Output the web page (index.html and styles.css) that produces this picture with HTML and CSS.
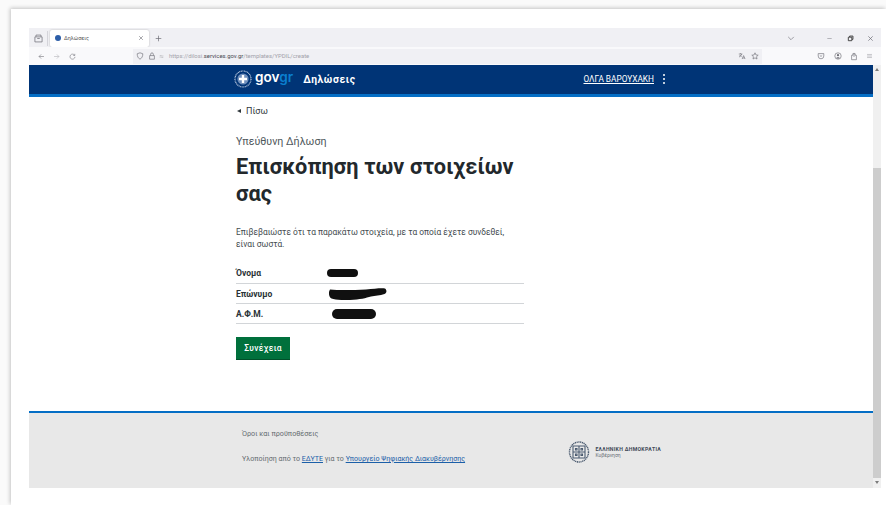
FILE: index.html
```html
<!DOCTYPE html>
<html lang="el">
<head>
<meta charset="utf-8">
<title>Δηλώσεις</title>
<link rel="stylesheet" href="styles.css">
</head>
<body>
<div class="sheet">
  <div class="window">
    <div class="tabstrip">
      <svg class="ico tabs-ico" viewBox="0 0 10 10"><path d="M1 3.2h8v5.6H1zM2.2 3V1.2h5.6V3M3.6 5h2.8"/></svg>
      <span class="tab-sep"></span>
      <div class="tab">
        <span class="favicon"></span>
        <span class="tab-title">Δηλώσεις</span>
        <svg class="ico tab-close" viewBox="0 0 8 8"><path d="M1.5 1.5l5 5M6.5 1.5l-5 5"/></svg>
      </div>
      <svg class="ico new-tab" viewBox="0 0 8 8"><path d="M4 .8v6.4M.8 4h6.4"/></svg>
      <span class="spacer"></span>
      <svg class="ico tab-list" viewBox="0 0 10 6"><path d="M1.5 1l3.5 3.5L8.500 1"/></svg>
      <svg class="ico win-min" viewBox="0 0 8 8"><path d="M1.500 4h5"/></svg>
      <svg class="ico win-restore" viewBox="0 0 8 8"><path d="M1.500 2.500h4v4h-4zM3 2.300V1.200h3.800V5H5.800"/></svg>
      <svg class="ico win-close" viewBox="0 0 8 8"><path d="M1.500 1.500l5 5M6.500 1.500l-5 5"/></svg>
    </div>
    <div class="toolbar">
      <svg class="ico nav-back" viewBox="0 0 10 10"><path d="M8.500 5h-7M4.500 2L1.500 5l3 3"/></svg>
      <svg class="ico nav-forward" viewBox="0 0 10 10"><path d="M1.500 5h7M5.500 2l3 3-3 3"/></svg>
      <svg class="ico nav-reload" viewBox="0 0 10 10"><path d="M8 3.200A3.600 3.600 0 1 0 8.600 5.500M8.300 1.200v2.300H6"/></svg>
      <div class="urlbar">
        <svg class="ico url-shield" viewBox="0 0 10 10"><path d="M5 1l3.500 1.200C8.500 5.500 7.300 7.800 5 9 2.700 7.800 1.500 5.500 1.500 2.200z"/></svg>
        <svg class="ico url-lock" viewBox="0 0 10 10"><path d="M2 4.500h6V9H2zM3.300 4.500V2.800a1.700 1.700 0 0 1 3.400 0v1.700"/></svg>
        <svg class="ico url-perm" viewBox="0 0 10 10"><path d="M1.500 3.500h4M7 3.500h1.500M1.500 6.500H3M4.500 6.500h4"/></svg>
        <span class="url-text">https://dilosi.<b>services.gov.gr</b>/templates/YPDIL/create</span>
        <span class="spacer"></span>
        <svg class="ico url-translate" viewBox="0 0 10 10"><path d="M1 2.500h4.500M3.200 1.500v1M4.600 2.500C4.200 4.300 3 5.500 1.300 6.200M2 3.800c.6 1 1.500 1.600 2.500 2M5.200 8.800L7 4.500l1.800 4.300M5.800 7.500h2.400"/></svg>
        <svg class="ico url-star" viewBox="0 0 10 10"><path d="M5 1l1.200 2.700 2.800.3-2.100 1.900.6 2.900L5 7.300 2.500 8.800l.6-2.900L1 4l2.800-.3z"/></svg>
      </div>
      <svg class="ico tb-pocket" viewBox="0 0 10 10"><path d="M1.500 2h7v3a3.500 3.500 0 0 1-7 0zM3.500 4.200L5 5.600l1.500-1.400"/></svg>
      <svg class="ico tb-account" viewBox="0 0 10 10"><circle cx="5" cy="5" r="4"/><circle class="solid" cx="5" cy="4" r="1.400"/><path class="solid" d="M2.700 7.600C3.200 6.200 6.800 6.200 7.300 7.600 6 8.500 4 8.500 2.700 7.600z"/></svg>
      <svg class="ico tb-share" viewBox="0 0 10 10"><path d="M2 3.500h1.500V1.500h3v2H8V9H2zM5 .5v5"/></svg>
      <svg class="ico tb-menu" viewBox="0 0 10 10"><path d="M1.500 2.800h7M1.500 5h7M1.500 7.200h7"/></svg>
    </div>
    <div class="viewport">
      <div class="page">
        <header class="site-header">
          <div class="brand">
            <svg class="brand-seal" viewBox="0 0 18 18">
              <circle class="seal-ring" cx="9" cy="9" r="8"/>
              <circle class="seal-disc" cx="9" cy="9" r="5.600"/>
              <path class="seal-cross" d="M7.800 5h2.400v2.800H13v2.400h-2.800V13H7.800v-2.800H5V7.800h2.800z"/>
            </svg>
            <span class="brand-name">gov<span class="brand-accent">gr</span></span>
            <span class="brand-app">Δηλώσεις</span>
          </div>
          <div class="user">
            <a class="user-name">ΟΛΓΑ ΒΑΡΟΥΧΑΚΗ</a>
            <span class="kebab"><i></i><i></i><i></i></span>
          </div>
        </header>
        <main class="content">
          <a class="back"><span class="back-arrow"></span>Πίσω</a>
          <p class="eyebrow">Υπεύθυνη Δήλωση</p>
          <h1 class="title">Επισκόπηση των στοιχείων σας</h1>
          <p class="lead">Επιβεβαιώστε ότι τα παρακάτω στοιχεία, με τα οποία έχετε συνδεθεί, είναι σωστά.</p>
          <dl class="facts">
            <div class="fact"><dt>Όνομα</dt><dd><span class="mask mask-first"></span></dd></div>
            <div class="fact"><dt>Επώνυμο</dt><dd><svg class="mask-last" viewBox="0 0 59 12"><path d="M2 1.500C12 2.500 26 2 38 1.500 46 1 52 0 57 .5 59 2 59 5 56.500 6 52 7.500 47 7.500 43 8.500 38 10 32 11.500 22 12 14 12.200 7 12 3.500 10.500 1 9 0 4.500 2 1.500z"/></svg></dd></div>
            <div class="fact"><dt>Α.Φ.Μ.</dt><dd><span class="mask mask-tax"></span></dd></div>
          </dl>
          <button class="primary" type="button">Συνέχεια</button>
        </main>
        <footer class="site-footer">
          <div class="footer-text">
            <p class="terms">Όροι και προϋποθέσεις</p>
            <p class="credits">Υλοποίηση από το <a>ΕΔΥΤΕ</a> για το <a>Υπουργείο Ψηφιακής Διακυβέρνησης</a></p>
          </div>
          <div class="gov-mark">
            <svg class="gov-seal" viewBox="0 0 22 24">
              <ellipse class="seal-outer" cx="11" cy="12" rx="9.500" ry="10"/>
              <path class="seal-shield" d="M5 6h12v12H5zM11 6v12M5 12h12M7.500 8.500h1.500v1.500H7.500zM13 8.500h1.500v1.500H13zM7.500 14h1.500v1.500H7.500zM13 14h1.500v1.500H13z"/>
            </svg>
            <div class="gov-words">
              <span class="gov-state">ΕΛΛΗΝΙΚΗ ΔΗΜΟΚΡΑΤΙΑ</span>
              <span class="gov-dept">Κυβέρνηση</span>
            </div>
          </div>
        </footer>
      </div>
      <div class="scrollbar">
        <span class="sb-up"></span>
        <span class="sb-track"><span class="sb-thumb"></span></span>
        <span class="sb-down"></span>
      </div>
    </div>
  </div>
</div>
</body>
</html>
```
FILE: styles.css
```css
* { box-sizing: border-box; }

html, body {
  margin: 0;
  height: 100%;
  overflow: hidden;
  background: #fafafa;
}

body { font-family: Roboto, "Noto Sans", sans-serif; color: #1d2529; }

.sheet {
  margin: 9px 0 0 11px;
  height: 496px;
  padding: 19px 5px 0 18px;
  background: #fff;
  box-shadow: -1px -1px 4px rgba(0, 0, 0, .22);
}

.window { display: flex; flex-direction: column; }

.ico { fill: none; stroke: #6d6d75; stroke-width: .8; display: block; flex: none; }
.ico .solid { fill: #6d6d75; stroke: none; }
.spacer { flex: 1; }

/* Tab strip */
.tabstrip {
  height: 19px;
  padding: 1px 0 0 5px;
  display: flex;
  align-items: center;
  background: #f0f0f4;
}
.tabs-ico { width: 9px; height: 9px; }
.tab-sep { width: 1px; height: 15px; margin: 0 2px 0 4px; background: #d4d4da; }
.tab {
  width: 99px;
  height: 17px;
  padding: 0 5px;
  display: flex;
  align-items: center;
  background: #fff;
  border-radius: 2px;
  box-shadow: 0 0 2px rgba(0, 0, 0, .25);
}
.favicon { width: 6px; height: 6px; border-radius: 50%; background: #2c5ea8; }
.tab-title { margin-left: 3px; flex: 1; font-size: 5.400px; color: #555; }
.tab-close { width: 6px; height: 6px; }
.new-tab { width: 7px; height: 7px; margin-left: 6px; }
.tab-list { width: 8px; height: 5px; margin-right: 31px; }
.win-min { width: 7px; height: 7px; margin-right: 14px; stroke: #9a9aa0; }
.win-restore { width: 7px; height: 7px; margin-right: 13px; stroke: #333; stroke-width: 1; }
.win-close { width: 7px; height: 7px; margin-right: 7px; }

/* Address toolbar */
.toolbar {
  height: 18px;
  padding: 0 8px 0 9px;
  display: flex;
  align-items: center;
  background: #f9f9fb;
}
.nav-back, .nav-forward, .nav-reload { width: 7px; height: 7px; }
.nav-forward { margin-left: 8px; stroke: #b0b0b6; }
.nav-reload { margin-left: 9px; }
.urlbar {
  width: 630px;
  height: 15px;
  margin-left: 57px;
  padding: 0 3px;
  display: flex;
  align-items: center;
  background: #f0f0f4;
}
.url-shield { width: 8px; height: 8px; margin-right: 4px; }
.url-lock { width: 8px; height: 8px; margin-right: 3px; }
.url-perm { width: 5px; height: 5px; margin-right: 5px; }
.url-text { font-size: 5.920px; color: #a2a2aa; white-space: nowrap; }
.url-text b { font-weight: 400; color: #4a4a52; }
.url-translate { width: 8px; height: 8px; margin-right: 5px; }
.url-star { width: 8px; height: 8px; }
.tb-pocket { width: 8px; height: 8px; margin-left: 55px; }
.tb-account { width: 8px; height: 8px; margin-left: 9px; }
.tb-share { width: 8px; height: 9px; margin-left: 8px; }
.tb-menu { width: 7px; height: 8px; margin-left: 8px; stroke: #a0a0a6; }

/* Page viewport and scrollbar */
.viewport { display: flex; height: 423px; }
.page { width: 844px; display: flex; flex-direction: column; background: #fff; }

.scrollbar { width: 8px; display: flex; flex-direction: column; background: #f0f0f0; }
.sb-up, .sb-down { height: 10px; flex: none; position: relative; }
.sb-up::after, .sb-down::after {
  content: "";
  position: absolute;
  left: 2px;
  top: 3px;
  border: 2.500px solid transparent;
  border-top: 0;
  border-bottom: 3px solid #7c7c7c;
}
.sb-down::after { transform: rotate(180deg); }
.sb-track { flex: 1; padding-top: 93px; display: flex; }
.sb-thumb { flex: 1; background: #cdcdcd; }

/* Site header */
.site-header {
  height: 32px;
  padding: 0 208px 1px 205px;
  display: flex;
  align-items: center;
  justify-content: space-between;
  background: #003476;
  border-bottom: 3px solid #046ec5;
  color: #fff;
}
.brand { display: flex; align-items: center; }
.brand-seal { width: 18px; height: 18px; }
.seal-ring { fill: none; stroke: #b9c8de; stroke-width: 1.200; stroke-dasharray: 1 .6; }
.seal-disc { fill: #6f8fbc; }
.seal-cross { fill: #fff; }
.brand-name {
  margin-left: 3px;
  font-family: Inter, sans-serif;
  font-size: 13.600px;
  font-weight: 600;
  line-height: 16px;
  position: relative;
  top: -2px;
}
.brand-accent { color: #0a7fd0; }
.brand-app { margin-left: 10px; font-size: 10.300px; font-weight: 700; letter-spacing: .62px; }
.user { display: flex; align-items: center; }
.user-name { font-size: 8.300px; text-decoration: underline; }
.kebab { margin-left: 9px; display: flex; flex-direction: column; gap: 2px; }
.kebab i { width: 2px; height: 2px; background: #fff; border-radius: 50%; }

/* Main column */
.content { flex: 1; padding: 9px 0 0 207px; width: 495px; }
.back { display: flex; align-items: center; height: 10px; font-size: 9px; color: #30383c; }
.back-arrow {
  width: 0;
  height: 0;
  margin: 0 5px 0 1px;
  border: 2.500px solid transparent;
  border-left: 0;
  border-right: 4px solid #30383c;
}
.eyebrow { margin: 19px 0 0; font-size: 10.700px; line-height: 14px; color: #50585c; }
.title { margin: 4px 0 0; font-size: 21.700px; font-weight: 700; line-height: 27px; letter-spacing: .1px; color: #22282c; }
.lead { margin: 19px 0 0; font-size: 8.400px; line-height: 12px; color: #444c50; width: 288px; }

.facts { margin: 13px 0 0; width: 288px; }
.fact { display: flex; align-items: center; height: 20px; border-bottom: 1px solid #d2d5d8; }
.fact:first-child { height: 21px; }
.fact dt { width: 91px; font-size: 8.500px; font-weight: 700; color: #2a3236; }
.fact dd { margin: 0; display: flex; }
.mask { display: block; height: 8px; background: #101010; border-radius: 4px; }
.mask-first { width: 31px; margin-top: -1px; }
.mask-last { display: block; width: 59px; height: 12px; margin-left: 1px; fill: #101010; }
.mask-tax { width: 44px; height: 10px; margin-left: 5px; border-radius: 5px; }

.primary {
  display: block;
  width: 54px;
  height: 23px;
  margin-top: 13px;
  padding: 0;
  border: 0;
  border-bottom: 1px solid #00502a;
  background: #00703c;
  color: #fff;
  font-family: Roboto, sans-serif;
  font-size: 8.500px;
  font-weight: 500;
  letter-spacing: .3px;
}

/* Footer */
.site-footer {
  height: 77px;
  padding: 0 212px 0 213px;
  display: flex;
  justify-content: space-between;
  background: #e8e8e8;
  border-top: 2px solid #046ec5;
  flex: none;
}
.footer-text { font-size: 7.070px; color: #666c70; }
.terms { margin: 16px 0 0; line-height: 10px; font-size: 7.200px; }
.credits { margin: 15px 0 0; line-height: 10px; white-space: nowrap; }
.credits a { color: #1b5fa8; text-decoration: underline; }
.gov-mark { display: flex; align-items: flex-start; padding-top: 27px; }
.gov-seal { width: 22px; height: 24px; }
.seal-outer { fill: none; stroke: #4b5b70; stroke-width: 1.400; stroke-dasharray: 1.200 .6; }
.seal-shield { fill: none; stroke: #4b5b70; stroke-width: 1.100; }
.gov-words { margin: 6px 0 0 5px; display: flex; flex-direction: column; }
.gov-state { font-size: 5.200px; font-weight: 700; letter-spacing: .28px; line-height: 6px; color: #3f4a58; white-space: nowrap; }
.gov-dept { font-size: 5px; line-height: 7px; color: #6a7078; }
```
